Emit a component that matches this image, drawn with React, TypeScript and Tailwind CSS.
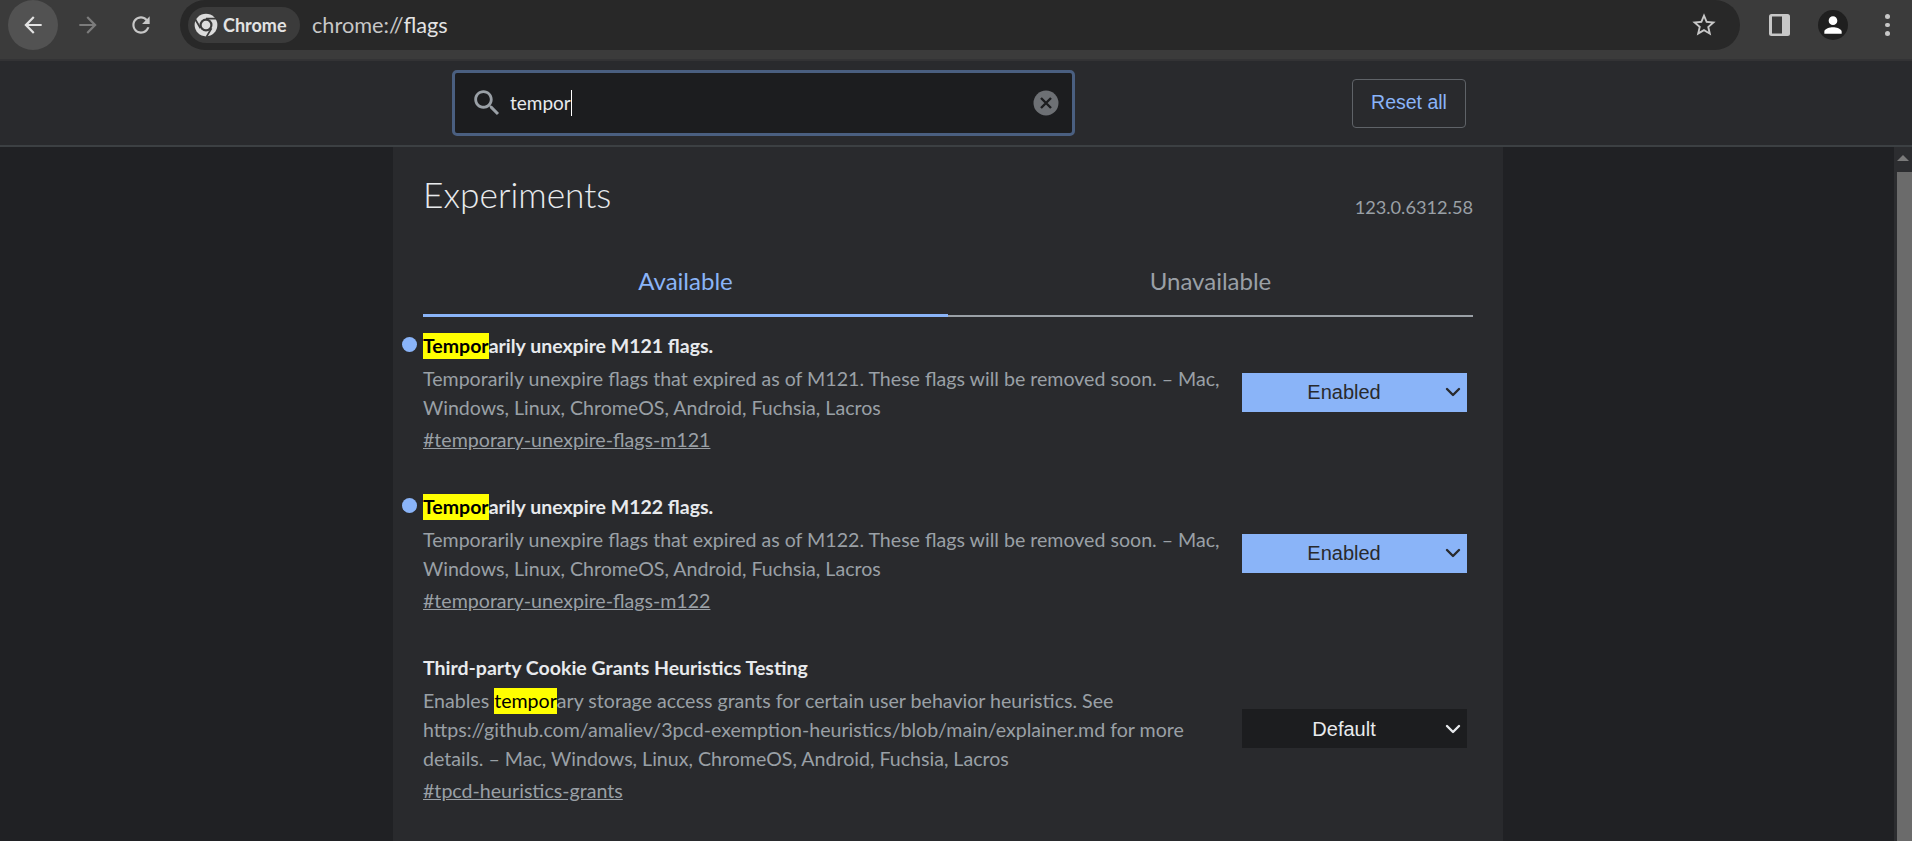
import * as React from 'react';
import { ChevronDown } from 'lucide-react';

const SEGOE = "font-['Lato',sans-serif]";

function Icon({ d, className }: { d: string; className?: string }) {
  return (
    <svg viewBox="0 0 24 24" fill="currentColor" className={className}>
      <path d={d} />
    </svg>
  );
}

function ChromeLogo() {
  return (
    <svg viewBox="0 0 24 24" className="h-[26px] w-[26px]">
      <circle cx="12" cy="12" r="10.5" fill="#dcdcdc" />
      <circle cx="12" cy="12" r="6" fill="#3b3b3b" />
      <circle cx="12" cy="12" r="4" fill="#dcdcdc" />
      <path d="M12 6.2H21.5M6.9 15L2.2 6.9M17.1 15L12.4 23" stroke="#3b3b3b" strokeWidth="1.6" fill="none" />
    </svg>
  );
}

function Toolbar() {
  return (
    <div className="flex h-[61px] items-start border-b-2 border-[#333335] bg-[#3b3b3b]">
      <div className="ml-2 flex h-[50px] w-[50px] items-center justify-center rounded-full bg-[#525252] text-[#e3e3e3]">
        <Icon className="h-[26px] w-[26px]" d="M20 11H7.83l5.59-5.59L12 4l-8 8 8 8 1.41-1.41L7.83 13H20v-2z" />
      </div>
      <div className="ml-[5px] flex h-[50px] w-[50px] items-center justify-center text-[#7c7c7c]">
        <Icon className="h-[26px] w-[26px]" d="M12 4l-1.41 1.41L16.17 11H4v2h12.17l-5.58 5.59L12 20l8-8z" />
      </div>
      <div className="ml-[7px] flex h-[50px] w-[42px] items-center justify-center text-[#c7c7c7]">
        <Icon className="h-[26px] w-[26px]" d="M17.65 6.35C16.2 4.9 14.21 4 12 4c-4.42 0-7.99 3.58-7.99 8s3.57 8 7.99 8c3.73 0 6.84-2.55 7.73-6h-2.08c-.82 2.33-3.04 4-5.65 4-3.31 0-6-2.69-6-6s2.69-6 6-6c1.66 0 3.14.69 4.22 1.78L13 11h7V4l-2.35 2.35z" />
      </div>
      <div className="ml-[18px] flex h-[50px] w-[1560px] items-center rounded-full bg-[#282828] pl-2 pr-[22px]">
        <div className="flex h-[36px] w-[112px] items-center gap-[4px] rounded-full bg-[#3b3b3b] pl-[5px]">
          <ChromeLogo />
          <span className={'text-[18px] font-bold text-[#e3e3e3] ' + SEGOE}>Chrome</span>
        </div>
        <span className={'ml-3 text-[21.7px] text-[#c7c7c7] ' + SEGOE}>
          chrome://<span className="text-[#e3e3e3]">flags</span>
        </span>
        <Icon className="ml-auto h-[28px] w-[28px] text-[#c7c7c7]" d="M22 9.24l-7.19-.62L12 2 9.19 8.63 2 9.24l5.46 4.73L5.82 21 12 17.27 18.18 21l-1.63-7.03L22 9.24zM12 15.4l-3.76 2.27 1-4.28-3.32-2.88 4.38-.38L12 6.1l1.71 4.04 4.38.38-3.32 2.88 1 4.28L12 15.4z" />
      </div>
      <div className="ml-[29px] flex h-[50px] items-center">
        <svg viewBox="0 0 21 22" className="h-[22px] w-[21px]">
          <rect x="0" y="0" width="21" height="22" rx="2.5" fill="#c7c7c7" />
          <rect x="3" y="2.5" width="10" height="17" fill="#3b3b3b" />
        </svg>
      </div>
      <div className="ml-[28px] flex h-[50px] items-center">
        <div className="flex h-[30px] w-[30px] items-center justify-center rounded-full bg-[#1f1f1f] text-white">
          <Icon className="h-[26px] w-[26px]" d="M12 12c2.21 0 4-1.79 4-4s-1.79-4-4-4-4 1.79-4 4 1.79 4 4 4zm0 2c-2.67 0-8 1.34-8 4v2h16v-2c0-2.66-5.33-4-8-4z" />
        </div>
      </div>
      <div className="ml-[37px] flex h-[50px] flex-col items-center justify-center gap-[4px]">
        <span className="h-[4.5px] w-[4.5px] rounded-full bg-[#c7c7c7]" />
        <span className="h-[4.5px] w-[4.5px] rounded-full bg-[#c7c7c7]" />
        <span className="h-[4.5px] w-[4.5px] rounded-full bg-[#c7c7c7]" />
      </div>
    </div>
  );
}

function SearchHeader() {
  return (
    <div className="flex h-[86px] items-center border-b-2 border-[#3c4043] bg-[#292a2d]">
      <div className="ml-[452px] flex h-[66px] w-[623px] items-center rounded-[5px] border-[3px] border-[#4a5f80] bg-[#1c1d1f] pl-[15px] pr-[13px]">
        <Icon className="h-[34px] w-[34px] text-[#9aa0a6]" d="M15.5 14h-.79l-.28-.27C15.41 12.59 16 11.11 16 9.5 16 5.91 13.09 3 9.5 3S3 5.91 3 9.5 5.91 16 9.5 16c1.61 0 3.09-.59 4.23-1.57l.27.28v.79l5 4.99L20.49 19l-4.99-5zm-6 0C7.01 14 5 11.99 5 9.5S7.01 5 9.5 5 14 7.01 14 9.5 11.99 14 9.5 14z" />
        <span className={'ml-[6px] text-[19px] text-[#e8eaed] ' + SEGOE}>tempor</span>
        <span className="h-[26px] w-px bg-white" />
        <svg viewBox="0 0 26 26" className="ml-auto h-[26px] w-[26px]">
          <circle cx="13" cy="13" r="12.5" fill="#6d7074" />
          <path d="M8 8l10 10M18 8L8 18" stroke="#1c1d1f" strokeWidth="2.4" />
        </svg>
      </div>
      <div className="ml-[277px] flex h-[49px] w-[114px] items-center justify-center rounded-[4px] border border-[#5f6368] font-['Liberation_Sans',sans-serif] text-[19.5px] text-[#8ab4f8]">
        Reset all
      </div>
    </div>
  );
}

function Highlight({ children }: { children: React.ReactNode }) {
  return <span className="inline-block h-[26px] bg-[#ffff00] leading-[26px] text-black">{children}</span>;
}

function FlagRow({
  title,
  lines,
  hash,
  value,
  modified,
}: {
  title: React.ReactNode;
  lines: React.ReactNode[];
  hash: string;
  value: string;
  modified?: boolean;
}) {
  return (
    <div className="relative flex items-center justify-between pr-[6px]">
      {modified && <span className="absolute left-[-21px] top-[4px] h-[15px] w-[15px] rounded-full bg-[#8ab4f8]" />}
      <div className={SEGOE}>
        <div className="text-[19.5px] font-bold leading-[26px] text-[#e8eaed]">{title}</div>
        <div className="mt-[5px] text-[19.6px] leading-[29px] text-[#9aa0a6]">
          {lines.map((line, i) => (
            <div key={i}>{line}</div>
          ))}
        </div>
        <div className="mt-[3px] text-[19.6px] leading-[29px] text-[#9aa0a6] underline">{hash}</div>
      </div>
      <div
        className={
          'relative mb-[3px] flex h-[39px] w-[225px] items-center justify-center pr-[21px] font-["Liberation_Sans",sans-serif] text-[20px] ' +
          (modified ? 'bg-[#8ab4f8] text-[#292a2d]' : 'bg-[#1c1d1f] text-[#e8eaed]')
        }
      >
        {value}
        <ChevronDown className="absolute right-[2px] h-[24px] w-[24px]" strokeWidth={2.4} />
      </div>
    </div>
  );
}

export default function App() {
  return (
    <div className="flex h-[841px] w-[1912px] flex-col overflow-hidden bg-[#202124]">
      <Toolbar />
      <SearchHeader />
      <div className="flex min-h-0 flex-1">
        <div className="ml-[393px] h-full w-[1110px] bg-[#292a2d] px-[30px]">
          <div className={'flex items-end justify-between pt-[23px] ' + SEGOE}>
            <h1 className="text-[35.3px] font-light leading-[50px] text-[#e8eaed]">Experiments</h1>
            <span className="pb-[1px] text-[18.2px] leading-[24px] text-[#9aa0a6]">123.0.6312.58</span>
          </div>
          <div className={'mt-[43px] flex text-[24px] leading-[35px] ' + SEGOE}>
            <div className="flex-1 border-b-[3px] border-[#8ab4f8] pb-[16px] text-center text-[#8ab4f8]">Available</div>
            <div className="flex-1 border-b-[2px] border-[#9aa0a6] pb-[16px] text-center text-[#9aa0a6]">Unavailable</div>
          </div>
          <div className="mt-[16px] flex flex-col gap-[40px]">
            <FlagRow
              modified
              title={<><Highlight>Tempor</Highlight>arily unexpire M121 flags.</>}
              lines={['Temporarily unexpire flags that expired as of M121. These flags will be removed soon. – Mac,', 'Windows, Linux, ChromeOS, Android, Fuchsia, Lacros']}
              hash="#temporary-unexpire-flags-m121"
              value="Enabled"
            />
            <FlagRow
              modified
              title={<><Highlight>Tempor</Highlight>arily unexpire M122 flags.</>}
              lines={['Temporarily unexpire flags that expired as of M122. These flags will be removed soon. – Mac,', 'Windows, Linux, ChromeOS, Android, Fuchsia, Lacros']}
              hash="#temporary-unexpire-flags-m122"
              value="Enabled"
            />
            <FlagRow
              title="Third-party Cookie Grants Heuristics Testing"
              lines={[
                <>Enables <Highlight>tempor</Highlight>ary storage access grants for certain user behavior heuristics. See</>,
                'https://github.com/amaliev/3pcd-exemption-heuristics/blob/main/explainer.md for more',
                'details. – Mac, Windows, Linux, ChromeOS, Android, Fuchsia, Lacros',
              ]}
              hash="#tpcd-heuristics-grants"
              value="Default"
            />
          </div>
        </div>
        <div className="flex-1" />
        <div className="flex h-full w-[18px] flex-col items-center bg-[#2c2d30]">
          <div className="mt-[8px] h-0 w-0 border-x-[6px] border-b-[6px] border-x-transparent border-b-[#7a7a7a]" />
          <div className="ml-[3px] mt-[11px] w-[15px] flex-1 bg-[#6b6b6b]" />
        </div>
      </div>
    </div>
  );
}
